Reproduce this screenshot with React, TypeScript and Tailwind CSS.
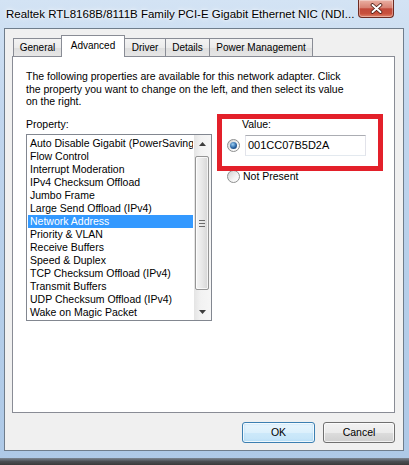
import React from "react";

const items = [
  "Auto Disable Gigabit (PowerSaving",
  "Flow Control",
  "Interrupt Moderation",
  "IPv4 Checksum Offload",
  "Jumbo Frame",
  "Large Send Offload (IPv4)",
  "Network Address",
  "Priority & VLAN",
  "Receive Buffers",
  "Speed & Duplex",
  "TCP Checksum Offload (IPv4)",
  "Transmit Buffers",
  "UDP Checksum Offload (IPv4)",
  "Wake on Magic Packet",
];

function Radio({ checked }: { checked?: boolean }) {
  return (
    <div className="w-[13px] h-[13px] shrink-0 rounded-full border border-[#8e8f8f] bg-[linear-gradient(135deg,#d0d0d0,#f4f4f4_60%,#ffffff)] flex items-center justify-center">
      {checked && (
        <div className="w-[7px] h-[7px] rounded-full bg-[radial-gradient(circle_at_40%_35%,#9cd0f5,#2a64a3_55%,#0d2f5c)]" />
      )}
    </div>
  );
}

function Tab({ label, w, selected, first }: { label: string; w: string; selected?: boolean; first?: boolean }) {
  if (selected) {
    return (
      <div className={`${w} h-[22px] -ml-px relative z-20 bg-white border border-b-0 border-[#898c95] flex items-center justify-center pb-[3px]`}>
        {label}
      </div>
    );
  }
  return (
    <div
      className={`${w} h-[18px] mb-px ${first ? "" : "-ml-px"} relative bg-[linear-gradient(#f3f3f3,#ebebeb_50%,#dedede_50%,#e6e6e6)] border border-b-0 border-[#898c95] flex items-center justify-center`}
    >
      {label}
    </div>
  );
}

export default function App() {
  return (
    <div className="w-[409px] h-[465px] overflow-hidden flex flex-col font-['Liberation_Sans',Arial,sans-serif] text-black">
      <div className="h-[458px] flex flex-col pl-[4px] pr-[5px] pb-[7px] bg-[linear-gradient(180deg,#d3e3f4,#c1d6ee_25%,#b6cfea_60%,#aec9e7)]">
        {/* title bar */}
        <div className="h-[28px] flex items-start justify-between">
          <div className="pl-[2px] pt-[7px] text-[11.5px] leading-[14px] whitespace-nowrap [text-shadow:0_0_6px_#fff,0_0_3px_#fff]">
            Realtek RTL8168B/8111B Family PCI-E Gigabit Ethernet NIC (NDI...
          </div>
          <div className="mr-[10px] w-[36px] h-[18px] rounded-b-[4px] border border-t-0 border-[#6e2b22] bg-[linear-gradient(#eab0a3,#d88273_45%,#c2493a_52%,#c8503c_80%,#e2846a)] flex items-center justify-center shadow-[inset_0_0_0_1px_rgba(255,255,255,0.35)]">
            <svg width="13" height="11" viewBox="0 0 13 11">
              <path d="M2.5 2 L10.5 9 M10.5 2 L2.5 9" stroke="#4a1a12" strokeWidth="3.6" strokeLinecap="round" />
              <path d="M2.5 2 L10.5 9 M10.5 2 L2.5 9" stroke="#ffffff" strokeWidth="2" strokeLinecap="round" />
            </svg>
          </div>
        </div>

        {/* dialog body */}
        <div className="h-[423px] border border-[#6f7d8c] bg-[#f0f0f0] flex flex-col pl-[7px] pr-[8px] pt-[6px]">
          {/* tabs */}
          <div className="h-[22px] flex items-end pl-[1px] relative z-10 text-[10px]">
            <Tab label="General" w="w-[49px]" first />
            <Tab label="Advanced" w="w-[64px]" selected />
            <Tab label="Driver" w="w-[42px]" />
            <Tab label="Details" w="w-[45px]" />
            <Tab label="Power Management" w="w-[104px]" />
          </div>

          {/* tab page */}
          <div className="-mt-px h-[357px] relative border border-[#898c95] bg-white pl-[13px] pt-[13px] text-[10.5px] leading-[12.5px]">
            <div className="whitespace-nowrap">
              The following properties are available for this network adapter. Click
              <br />
              the property you want to change on the left, and then select its value
              <br />
              on the right.
            </div>

            <div className="mt-[10px] flex">
              {/* left column */}
              <div className="w-[186px] flex flex-col">
                <div>Property:</div>
                <div className="mt-[4px] h-[187px] border border-[#828790] bg-white flex">
                  <div className="flex-1 min-w-0 pt-[2px] pl-[1px] pr-[1px] leading-[13px]">
                    {items.map((it) => (
                      <div
                        key={it}
                        className={`h-[13px] pl-[2px] whitespace-nowrap overflow-hidden ${
                          it === "Network Address" ? "bg-[#3399ff] text-white" : ""
                        }`}
                      >
                        {it}
                      </div>
                    ))}
                  </div>
                  {/* scrollbar */}
                  <div className="w-[17px] shrink-0 flex flex-col bg-[linear-gradient(90deg,#e4e4e4,#f2f2f2_40%,#f6f6f6)]">
                    <div className="h-[17px] flex items-center justify-center">
                      <svg width="7" height="4" viewBox="0 0 7 4">
                        <path d="M0 4 L3.5 0 L7 4 Z" fill="#3d3d3d" />
                      </svg>
                    </div>
                    <div className="mt-[4px] ml-[1px] w-[14px] h-[134px] rounded-[2px] border border-[#959595] bg-[linear-gradient(90deg,#f4f4f4,#e8e8e8_50%,#d6d6d6)] shadow-[inset_0_0_0_1px_rgba(255,255,255,0.7)] flex flex-col items-center justify-center gap-[2px]">
                      <div className="w-[6px] h-px bg-[#6b6b6b]" />
                      <div className="w-[6px] h-px bg-[#6b6b6b]" />
                      <div className="w-[6px] h-px bg-[#6b6b6b]" />
                    </div>
                    <div className="flex-1" />
                    <div className="h-[17px] flex items-center justify-center">
                      <svg width="7" height="4" viewBox="0 0 7 4">
                        <path d="M0 0 L3.5 4 L7 0 Z" fill="#3d3d3d" />
                      </svg>
                    </div>
                  </div>
                </div>
              </div>

              {/* right column */}
              <div className="ml-[15px] flex flex-col">
                <div className="pl-[15px]">Value:</div>
                <div className="mt-[5px] flex items-center gap-[5px]">
                  <Radio checked />
                  <div className="w-[121px] h-[21px] border border-[#e2e3ea] border-t-[#abadb3] border-b-[#e3e9ef] bg-white flex items-center pl-[2px] text-[11px]">
                    001CC07B5D2A
                  </div>
                </div>
                <div className="mt-[14px] h-[13px] flex items-center gap-[3px]">
                  <Radio />
                  <span className="leading-[13px]">Not Present</span>
                </div>
              </div>
            </div>

            {/* red annotation box */}
            <div className="absolute left-[204px] top-[57px] w-[166px] h-[57px] border-[5px] border-[#e3202a]" />
          </div>

          {/* buttons */}
          <div className="mt-[9px] flex justify-end gap-[8px] text-[10.5px]">
            <div className="w-[73px] h-[21px] rounded-[3px] border border-[#3c7fb1] bg-[linear-gradient(#eaf6fd,#dcf0fc_50%,#cde9fa_50%,#c3e4f8)] shadow-[inset_0_0_0_1px_rgba(255,255,255,0.8),inset_0_0_3px_rgba(80,170,230,0.6)] flex items-center justify-center">
              OK
            </div>
            <div className="w-[72px] h-[21px] rounded-[3px] border border-[#707070] bg-[linear-gradient(#f2f2f2,#ebebeb_50%,#dddddd_50%,#cfcfcf)] shadow-[inset_0_0_0_1px_rgba(255,255,255,0.7)] flex items-center justify-center">
              Cancel
            </div>
          </div>
        </div>
      </div>
      <div className="h-[7px] bg-[linear-gradient(#7d8793,#4a4d52_50%,#3a3a3a)]" />
    </div>
  );
}
